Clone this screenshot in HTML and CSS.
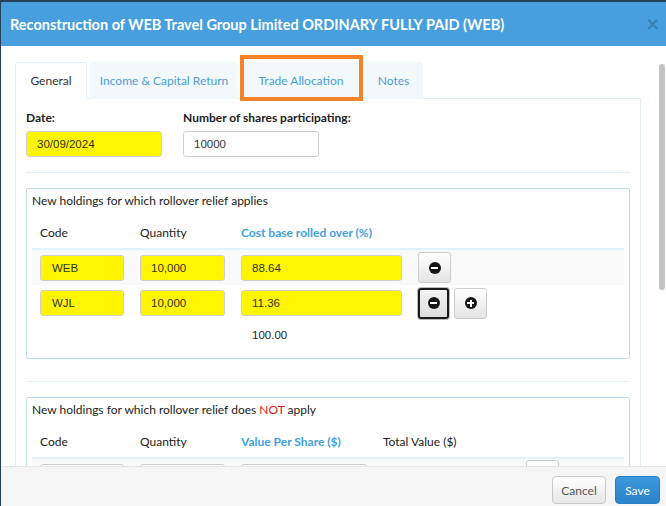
FILE: index.html
```html
<!DOCTYPE html>
<html>
<head>
<meta charset="utf-8">
<link rel="stylesheet" href="styles.css">
</head>
<body>
<div class="modal">
  <div class="modal-header">
    <h4 class="modal-title">Reconstruction of WEB Travel Group Limited ORDINARY FULLY PAID (WEB)</h4>
    <span class="close">&times;</span>
  </div>
  <div class="modal-body">
    <div class="tabs">
      <div class="tab active">General</div>
      <div class="tab t2">Income &amp; Capital Return</div>
      <div class="tab t3">Trade Allocation</div>
      <div class="tab t4">Notes</div>
      <div class="highlight"></div>
    </div>
    <div class="pane">
      <div class="fields">
        <div class="field">
          <label>Date:</label>
          <div class="input yellow wide">30/09/2024</div>
        </div>
        <div class="field">
          <label>Number of shares participating:</label>
          <div class="input wide">10000</div>
        </div>
      </div>
      <hr class="sep">
      <div class="box">
        <div class="box-title">New holdings for which rollover relief applies</div>
        <div class="grid">
          <div class="row head">
            <div class="c1">Code</div>
            <div class="c2">Quantity</div>
            <div class="c3 link">Cost base rolled over (%)</div>
            <div class="c4"></div>
          </div>
          <div class="row shaded">
            <div class="c1"><div class="input yellow code">WEB</div></div>
            <div class="c2"><div class="input yellow qty">10,000</div></div>
            <div class="c3"><div class="input yellow cost">88.64</div></div>
            <div class="c4"><span class="btn"><span class="ico minus"></span></span></div>
          </div>
          <div class="row">
            <div class="c1"><div class="input yellow code">WJL</div></div>
            <div class="c2"><div class="input yellow qty">10,000</div></div>
            <div class="c3"><div class="input yellow cost">11.36</div></div>
            <div class="c4"><span class="btn focus"><span class="ico minus"></span></span><span class="btn"><span class="ico plus"></span></span></div>
          </div>
          <div class="row total">
            <div class="c1"></div>
            <div class="c2"></div>
            <div class="c3"><span class="sum">100.00</span></div>
            <div class="c4"></div>
          </div>
        </div>
      </div>
      <hr class="sep second">
      <div class="box">
        <div class="box-title">New holdings for which rollover relief does <span class="not">NOT</span> apply</div>
        <div class="grid">
          <div class="row head">
            <div class="c1">Code</div>
            <div class="c2">Quantity</div>
            <div class="c3b link">Value Per Share ($)</div>
            <div class="c5">Total Value ($)</div>
          </div>
          <div class="row shaded">
            <div class="c1"><div class="input code"></div></div>
            <div class="c2"><div class="input qty"></div></div>
            <div class="c3b"><div class="input vps"></div></div>
            <div class="c5"></div>
            <div class="c6"><span class="btn"></span></div>
          </div>
        </div>
      </div>
    </div>
    <div class="scroll-thumb"></div>
  </div>
  <div class="modal-footer">
    <span class="fbtn cancel">Cancel</span>
    <span class="fbtn save">Save</span>
  </div>
</div>
</body>
</html>
```

FILE: styles.css
```css
html, body {
  margin: 0;
  padding: 0;
  height: 506px;
  overflow: hidden;
}
body {
  background: #23415a;
  font-family: Lato, "Open Sans", sans-serif;
  font-size: 12px;
  color: #222;
}
.modal {
  margin: 2px 0 0 1px;
  width: 665px;
  height: 504px;
  background: #fff;
  display: flex;
  flex-direction: column;
  overflow: hidden;
}
.modal-header {
  height: 44px;
  flex: none;
  background: #47a0dd;
  display: flex;
  align-items: center;
  justify-content: space-between;
  padding: 0 7px 0 9px;
  box-sizing: border-box;
}
.modal-title {
  margin: 0;
  color: #fff;
  font-size: 14.5px;
  font-weight: bold;
}
.close {
  color: #2f77a8;
  font-size: 22px;
  font-weight: bold;
  line-height: 1;
  opacity: 0.75;
}
.modal-body {
  flex: 1;
  position: relative;
  overflow: hidden;
  padding: 16px 25px 0 14px;
}
.scroll-thumb {
  position: absolute;
  right: 1px;
  top: 18px;
  width: 6px;
  height: 226px;
  border-radius: 3px;
  background: #c3c3c3;
}
.tabs {
  position: relative;
  display: flex;
  height: 36px;
  gap: 3px;
  border-bottom: 1px solid #e3eff8;
}
.tab {
  box-sizing: border-box;
  display: flex;
  align-items: center;
  justify-content: center;
  white-space: nowrap;
  color: #4aa0d9;
  background: #f3f8fb;
  border-radius: 3px 3px 0 0;
  font-size: 12px;
  margin-bottom: -1px;
  border: 1px solid transparent;
}
.tab.active {
  width: 72px;
  color: #333;
  background: #fff;
  border-color: #e3eff8 #e3eff8 #fff;
}
.tab.t2 { width: 148px; }
.tab.t3 { width: 116px; margin-left: 2px; }
.tab.t4 { width: 59px; margin-left: 2px; }
.highlight {
  position: absolute;
  left: 225px;
  top: -7px;
  width: 115px;
  height: 38px;
  border: 4px solid #f5832a;
}
.pane {
  border-left: 1px solid #e3eff8;
  border-right: 1px solid #e3eff8;
  padding: 10px 10px 20px 10px;
  height: 400px;
}
.fields {
  display: flex;
  gap: 21px;
}
.field label {
  display: block;
  font-weight: bold;
  color: #222;
  height: 14px;
  line-height: 14px;
  margin-top: 2px;
  margin-bottom: 6px;
}
.input {
  box-sizing: border-box;
  height: 26px;
  border: 1px solid #cfcfcf;
  border-radius: 3px;
  background: #fff;
  font-family: "Liberation Sans", Arial, sans-serif;
  font-size: 11.5px;
  color: #333;
  padding: 0 10px;
  display: flex;
  align-items: center;
}
.input.yellow { background: #fff500; }
.input.wide { width: 136px; }
.input.code { padding-left: 11px; }
.sep {
  border: 0;
  border-top: 1px solid #e3f1fb;
  margin: 15px 0 15px 0;
}
.sep.second { margin: 22px 0 15px 0; }
.box {
  border: 1px solid #bcdcf0;
  border-radius: 2px;
  padding: 5px 5px 9px 5px;
}
.box-title {
  height: 14px;
  line-height: 14px;
  color: #222;
}
.grid { margin-top: 9px; }
.row {
  display: flex;
  align-items: center;
  height: 36px;
}
.row.head {
  height: 30px;
  border-bottom: 2px solid #e3f1fb;
  padding-bottom: 1px;
}
.row.shaded { background: #f9f9f9; height: 35px; }
.row.total { height: 28px; align-items: flex-start; }
.row > div { padding-left: 8px; box-sizing: border-box; }
.c1 { width: 100px; }
.c2 { width: 101px; }
.c3 { width: 177px; }
.c3b { width: 142px; }
.c5 { width: 151px; }
.c6 { padding-left: 0 !important; }
.c4 { display: flex; gap: 5px; }
.link { color: #3f9fe0; font-weight: bold; }
.input.code { width: 84px; }
.input.qty { width: 85px; }
.input.cost { width: 161px; }
.input.vps { width: 126px; }
.sum {
  display: inline-block;
  padding-left: 11px;
  margin-top: 8px;
  font-family: "Liberation Sans", Arial, sans-serif;
  font-size: 11.5px;
  color: #222;
}
.not { color: #e8141c; }
.btn {
  box-sizing: border-box;
  width: 33px;
  height: 31px;
  border: 1px solid #cdcdcd;
  border-radius: 3px;
  background: linear-gradient(#fff, #e4e4e4);
  display: inline-flex;
  align-items: center;
  justify-content: center;
}
.btn.focus {
  width: 31px;
  border: 2px solid #1a1a1a;
  box-shadow: 0 0 0 1px #bbb;
  background: linear-gradient(#f4f4f4, #dedede);
}
.ico {
  position: relative;
  width: 12px;
  height: 12px;
  border-radius: 50%;
  background: #151515;
}
.ico::before {
  content: "";
  position: absolute;
  left: 2.5px;
  top: 5px;
  width: 7px;
  height: 2px;
  background: #fff;
}
.ico.plus::after {
  content: "";
  position: absolute;
  left: 5px;
  top: 2.5px;
  width: 2px;
  height: 7px;
  background: #fff;
}
.modal-footer {
  flex: none;
  height: 40px;
  border-top: 1px solid #e5e5e5;
  background: #f5f5f5;
  display: flex;
  justify-content: flex-end;
  align-items: flex-start;
  gap: 9px;
  padding: 9px 6px 0 0;
  box-sizing: border-box;
}
.fbtn {
  box-sizing: border-box;
  height: 28px;
  border-radius: 4px;
  display: inline-flex;
  align-items: center;
  justify-content: center;
  font-size: 12px;
}
.cancel {
  width: 54px;
  border: 1px solid #c9c9c9;
  background: linear-gradient(#fff, #e6e6e6);
  color: #555;
}
.save {
  width: 45px;
  border: 1px solid #2a7fc2;
  background: linear-gradient(#3b99de, #2b83c9);
  color: #fff;
}
```
